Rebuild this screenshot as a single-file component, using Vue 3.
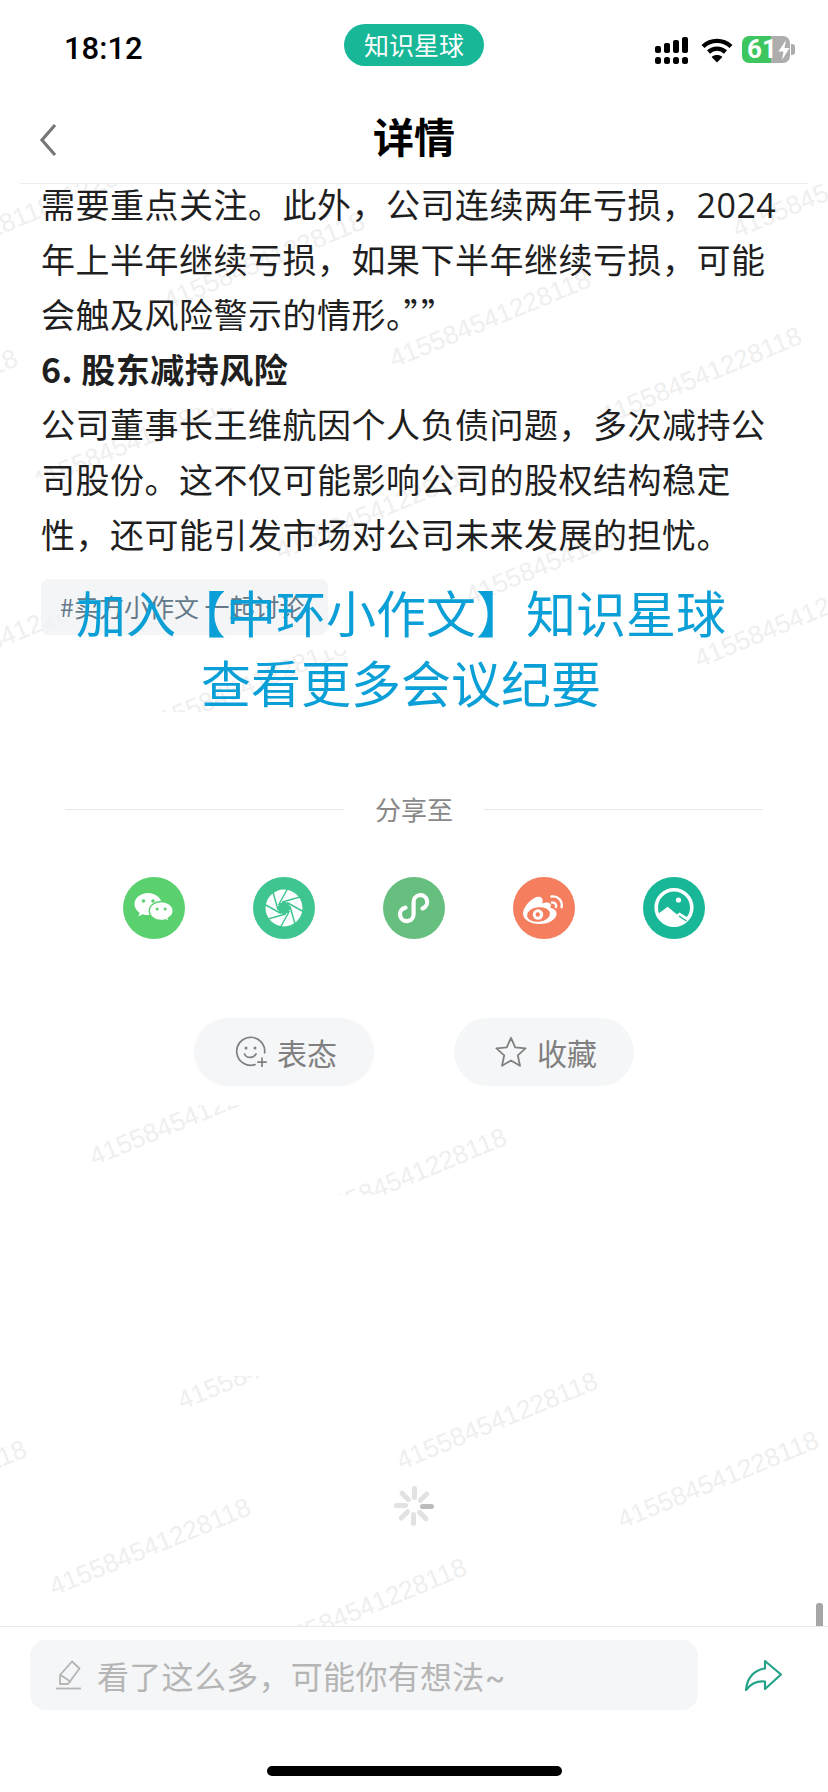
<script setup>
const marks = [
  { x: 168, y: 310 }, { x: 394, y: 368 }, { x: 605, y: 425 }, { x: -179, y: 447 },
  { x: 737, y: 238 }, { x: -143, y: 294 }, { x: -40, y: 250, top: 184, bot: 192 },
  { x: 36, y: 491, top: 408, bot: 478 }, { x: 280, y: 560, top: 470, bot: 560 },
  { x: 470, y: 605, top: 540, bot: 640 }, { x: -89, y: 685, top: 615, bot: 700 }, { x: 699, y: 668 },
  { x: 150, y: 735, top: 650, bot: 712 },
  { x: 94, y: 1166, top: 1105, bot: 1300 }, { x: 310, y: 1226, top: 1100, bot: 1195 },
  { x: 182, y: 1410, top: 1376, bot: 1500 }, { x: 401, y: 1470 }, { x: 622, y: 1529 },
  { x: -170, y: 1538 }, { x: 54, y: 1596 }, { x: 270, y: 1656, top: 1400, bot: 1626 }
].map((m, i) => ({ top: 184, bot: 1626, id: 'wm' + i, ...m }))

const ticks = [0, 45, 90, 135, 180, 225, 270, 315]
const blades = [0, 45, 90, 135, 180, 225, 270, 315]
</script>

<template>
  <div class="page">
    <svg class="marks" width="828" height="1792" viewBox="0 0 828 1792">
      <defs>
        <clipPath v-for="m in marks" :id="m.id" :key="m.id">
          <rect x="0" :y="m.top" width="828" :height="m.bot - m.top" />
        </clipPath>
      </defs>
      <g v-for="m in marks" :key="m.id" :clip-path="`url(#${m.id})`">
        <text class="mark" :transform="`translate(${m.x} ${m.y}) rotate(-22.5)`">415584541228118</text>
      </g>
    </svg>

    <header class="status">
      <div class="time">18:12</div>
      <div class="pill">知识星球</div>
      <div class="sys">
        <svg class="signal" width="33" height="27" viewBox="0 0 33 27" fill="#000">
          <rect x="0" y="9" width="6" height="7" rx="2" />
          <rect x="9" y="6" width="6" height="10" rx="2" />
          <rect x="18" y="3" width="6" height="13" rx="2" />
          <rect x="27" y="0" width="6" height="16" rx="2" />
          <rect x="0" y="20" width="6" height="7" rx="2.5" />
          <rect x="9" y="20" width="6" height="7" rx="2.5" />
          <rect x="18" y="20" width="6" height="7" rx="2.5" />
          <rect x="27" y="20" width="6" height="7" rx="2.5" />
        </svg>
        <svg class="wifi" width="32" height="26" viewBox="0 0 32 26" fill="none" stroke="#000" stroke-width="4.4">
          <path d="M2 9.5C10 2 22 2 30 9.5" />
          <path d="M7.5 15C12.5 10.5 19.5 10.5 24.5 15" />
          <path d="M16 25.5L10.6 20C13.6 17.4 18.4 17.4 21.4 20Z" fill="#000" stroke="none" />
        </svg>
        <div class="battery">
          <span class="level">61</span>
          <svg class="bolt" width="14" height="22" viewBox="0 0 14 22">
            <path d="M9 1L1.5 12.5H6.5L5 21L12.5 9H7.5Z" fill="#fff" />
          </svg>
        </div>
        <div class="nub"></div>
      </div>
    </header>

    <nav class="nav">
      <svg class="back" width="18" height="34" viewBox="0 0 18 34" fill="none" stroke="#777" stroke-width="3.2">
        <path d="M16 2L3 17L16 32" />
      </svg>
      <h1 class="title">详情</h1>
    </nav>

    <main class="scroller">
      <article class="article">
        <p>需要重点关注。此外，公司连续两年亏损，<span class="num">2024</span><br />年上半年继续亏损，如果下半年继续亏损，可能<br />会触及风险警示的情形。””</p>
        <p class="bold">6. 股东减持风险</p>
        <p>公司董事长王维航因个人负债问题，多次减持公<br />司股份。这不仅可能影响公司的股权结构稳定<br />性，还可能引发市场对公司未来发展的担忧。</p>
      </article>
      <div class="tag">#卖方小作文 一起讨论</div>

      <div class="share-title">
        <span class="rule"></span>
        <span class="share-label">分享至</span>
        <span class="rule"></span>
      </div>

      <div class="share-row">
        <svg class="share-icon" viewBox="0 0 62 62">
          <circle cx="31" cy="31" r="31" fill="#5ad16e" />
          <path d="M25 16C17.5 16 11.5 21 11.5 27.2C11.5 30.8 13.6 33.7 16.6 35.7L15.5 39.2L19.8 37.2C21.5 37.8 23.2 38.1 25 38.1C32.5 38.1 38.7 33.2 38.7 27.2C38.7 21 32.5 16 25 16Z" fill="#fff" />
          <circle cx="20.5" cy="24" r="1.8" fill="#5ad16e" />
          <circle cx="30" cy="24" r="1.8" fill="#5ad16e" />
          <path d="M38.3 24.5C31.6 24.5 26.3 28.7 26.3 34C26.3 39.3 31.6 43.4 38.3 43.4C39.7 43.4 41 43.2 42.2 42.8L46 44.6L45.1 41.3C48.1 39.6 50.2 37 50.2 34C50.2 28.7 45 24.5 38.3 24.5Z" fill="#fff" stroke="#5ad16e" stroke-width="1.4" />
          <circle cx="34.2" cy="32" r="1.5" fill="#5ad16e" />
          <circle cx="42.2" cy="32" r="1.5" fill="#5ad16e" />
        </svg>
        <svg class="share-icon" viewBox="0 0 62 62">
          <circle cx="31" cy="31" r="31" fill="#3ec590" />
          <circle cx="31" cy="31" r="18.5" fill="#fff" />
          <g v-for="b in blades" :key="b" :transform="`rotate(${b} 31 31)`">
            <path d="M25.5 28L35 11" stroke="#3ec590" stroke-width="1.5" />
          </g>
          <path d="M31 24.5L35.6 26.4L37.5 31L35.6 35.6L31 37.5L26.4 35.6L24.5 31L26.4 26.4Z" fill="#3ec590" />
        </svg>
        <svg class="share-icon" viewBox="0 0 62 62">
          <circle cx="31" cy="31" r="31" fill="#66bf7f" />
          <path d="M22.5 30.6A6.8 6.8 0 1 0 30.6 37V25.6A6.8 6.8 0 1 1 39.5 31.4" fill="none" stroke="#fff" stroke-width="4.2" stroke-linecap="round" />
        </svg>
        <svg class="share-icon" viewBox="0 0 62 62">
          <circle cx="31" cy="31" r="31" fill="#f47e5d" />
          <path d="M26.5 47C17.5 47 10 42.8 10 36.6C10 31.5 15 24.5 21 21.2C25.5 18.8 29 19.7 29.6 22.7C29.9 24.2 29.5 25.6 29.3 26.4C32.7 25 36.5 25 37.6 27.3C38.1 28.5 37.8 29.7 37.3 30.8C41.2 31.8 43.6 33.6 43.6 36.7C43.6 41.9 36.4 47 26.5 47Z" fill="#fff" />
          <ellipse cx="25.5" cy="37.5" rx="11.5" ry="7.3" fill="#f47e5d" transform="rotate(-6 25.5 37.5)" />
          <circle cx="25" cy="37.5" r="5.2" fill="#fff" />
          <circle cx="24.8" cy="37.5" r="2.2" fill="#f47e5d" />
          <path d="M39 25.5C41.8 25.2 43.6 27.2 43 30" fill="none" stroke="#fff" stroke-width="2.4" stroke-linecap="round" />
          <path d="M38.5 19.5C44.8 18.6 49.8 23.6 48.6 30.2" fill="none" stroke="#fff" stroke-width="2.4" stroke-linecap="round" />
        </svg>
        <svg class="share-icon" viewBox="0 0 62 62">
          <circle cx="31" cy="31" r="31" fill="#17b797" />
          <circle cx="31" cy="30.5" r="17.8" fill="#17b797" stroke="#fff" stroke-width="3.6" />
          <circle cx="35.5" cy="23" r="2.6" fill="#fff" />
          <path d="M15 37L24.6 29.8L34 37.6L36.4 35.6L45.6 41C42.8 45 37.4 47 31 47C24 47 18 43.5 15 37Z" fill="#fff" />
          <path d="M36 39L43.5 44" stroke="#17b797" stroke-width="1.4" />
        </svg>
      </div>

      <div class="actions">
        <button class="act">
          <svg width="32" height="32" viewBox="0 0 32 32" fill="none" stroke="#808080" stroke-width="1.7">
            <path d="M20 28.6A14 14 0 1 1 29.6 17" stroke-linecap="round" />
            <circle cx="11" cy="12" r="1.5" fill="#808080" stroke="none" />
            <circle cx="20" cy="12" r="1.5" fill="#808080" stroke="none" />
            <path d="M9.5 18C11.5 22.5 18.5 22.5 21 18" stroke-linecap="round" />
            <path d="M27 21.5V31M22.2 26.2H31.8" />
          </svg>
          <span>表态</span>
        </button>
        <button class="act">
          <svg width="32" height="32" viewBox="0 0 32 32" fill="none" stroke="#808080" stroke-width="1.8" stroke-linejoin="round">
            <path d="M16 1.8L20.2 11.3L30.6 12.4L22.8 19.3L25 29.8L16 24.4L7 29.8L9.2 19.3L1.4 12.4L11.8 11.3Z" />
          </svg>
          <span>收藏</span>
        </button>
      </div>

      <div class="spinner">
        <span v-for="(t, i) in ticks" :key="t" class="tick" :class="{ dark: i === 2 }" :style="{ transform: `rotate(${t}deg)` }"></span>
      </div>
    </main>

    <div class="join">加入【中环小作文】知识星球<br />查看更多会议纪要</div>
    <div class="thumb"></div>

    <footer class="foot">
      <div class="bar">
        <div class="input">
          <svg width="27" height="30" viewBox="0 0 27 30" fill="none" stroke="#b5b5b5" stroke-width="1.8" stroke-linejoin="round">
            <path d="M17 1.5L24.5 8.5L13 24H5V15Z" />
            <path d="M5.5 15L16 22" />
            <path d="M1 28.5H26" />
          </svg>
          <span>看了这么多，可能你有想法~</span>
        </div>
        <svg class="send" width="40" height="32" viewBox="0 0 40 32" fill="none" stroke="#24a388" stroke-width="2.2" stroke-linejoin="round">
          <path d="M21 2L37 15.5L21 30V22.5C12 21.5 6.5 25 2 31C3 19 10 11 21 9.5Z" />
        </svg>
      </div>
      <div class="home"></div>
    </footer>
  </div>
</template>

<style scoped>
.page {
  position: relative;
  width: 828px;
  height: 1792px;
  overflow: hidden;
  background: #fff;
  display: flex;
  flex-direction: column;
  font-family: "Noto Sans CJK SC", "Liberation Sans", sans-serif;
}
.marks { position: absolute; inset: 0; pointer-events: none; }
.mark { font-family: "Liberation Sans", sans-serif; font-size: 26px; fill: #efefef; }

.status {
  position: relative;
  height: 90px;
  display: grid;
  grid-template-columns: 1fr 140px 1fr;
  align-items: start;
}
.time {
  margin: 29px 0 0 64px;
  font-family: "Roboto", sans-serif;
  font-weight: 500;
  font-size: 31px;
  line-height: 40px;
  color: #000;
}
.pill {
  margin-top: 24px;
  height: 42px;
  border-radius: 21px;
  background: #17b797;
  color: #fff;
  font-size: 25px;
  font-weight: 400;
  line-height: 40px;
  text-align: center;
}
.sys {
  margin: 36px 0 0 171px;
  display: flex;
  align-items: flex-start;
}
.signal { margin-top: 1px; flex: none; }
.wifi { margin: 1px 0 0 13px; flex: none; }
.battery {
  position: relative;
  flex: none;
  margin-left: 9px;
  width: 48px;
  height: 27px;
  border-radius: 7px;
  background: linear-gradient(90deg, #3dc65f 0 60%, #adadad 60% 100%);
  display: flex;
  align-items: center;
  overflow: hidden;
}
.level {
  margin-left: 5px;
  font-family: "Roboto", sans-serif;
  font-weight: 700;
  font-size: 26px;
  line-height: 27px;
  color: #fff;
}
.bolt { margin-left: 0; flex: none; }
.nub {
  flex: none;
  margin: 8px 0 0 1px;
  width: 4px;
  height: 11px;
  border-radius: 0 3px 3px 0;
  background: #adadad;
}

.nav {
  position: relative;
  height: 94px;
  margin: 0 20px;
  box-sizing: border-box;
  border-bottom: 1px solid #ececec;
  display: flex;
  justify-content: center;
}
.back { position: absolute; left: 19px; top: 33px; }
.title {
  margin: 16px 0 0;
  font-size: 41px;
  line-height: 58px;
  font-weight: 700;
  color: #000;
}

.scroller {
  position: relative;
  flex: 1;
  min-height: 0;
  overflow: hidden;
  padding: 0 41px;
}
.article {
  margin-top: -8px;
  font-size: 34px;
  letter-spacing: 0.5px;
  line-height: 55px;
  color: #1f1f1f;
  white-space: nowrap;
}
.article p { margin: 0; }
.article .bold { font-weight: 700; }
.article .num { font-family: "Open Sans", sans-serif; line-height: 1; }
.tag {
  margin-top: 18px;
  width: 287px;
  height: 56px;
  box-sizing: border-box;
  padding-left: 19px;
  border-radius: 8px;
  background: rgba(240, 242, 244, 0.8);
  color: #64798a;
  font-size: 25px;
  line-height: 54px;
  white-space: nowrap;
}
.share-title {
  margin: 156px 0 0 24px;
  width: 698px;
  height: 36px;
  display: flex;
  align-items: center;
}
.rule { flex: 1; height: 1px; background: #e8e8e8; }
.share-label {
  width: 140px;
  text-align: center;
  font-size: 26px;
  line-height: 36px;
  color: #888;
}
.share-row {
  margin: 50px 0 0 82px;
  display: flex;
  gap: 68px;
}
.share-icon { width: 62px; height: 62px; display: block; }
.actions {
  margin: 79px 0 0 153px;
  display: flex;
  gap: 80px;
}
.act {
  width: 180px;
  height: 68px;
  border: 0;
  padding: 0 0 0 4px;
  border-radius: 34px;
  background: #f5f6f7;
  color: #808080;
  font-family: inherit;
  font-size: 30px;
  display: flex;
  align-items: center;
  justify-content: center;
  gap: 10px;
}
.spinner {
  position: relative;
  margin: 400px 0 0 353px;
  width: 40px;
  height: 40px;
}
.tick {
  position: absolute;
  left: 0;
  top: 0;
  width: 40px;
  height: 40px;
}
.tick::after {
  content: "";
  position: absolute;
  left: 17.5px;
  top: 0;
  width: 5px;
  height: 14px;
  border-radius: 3px;
  background: #e2e2e2;
}
.tick.dark::after { background: #bdbdbd; }

.join {
  position: absolute;
  left: 0;
  right: 0;
  top: 576px;
  text-align: center;
  font-size: 50px;
  line-height: 70px;
  color: #0a9fd6;
  transform: translateX(-13px);
}
.thumb {
  position: absolute;
  left: 816px;
  top: 1603px;
  width: 7px;
  height: 24px;
  border-radius: 3px 3px 0 0;
  background: #a6a6a6;
}

.foot {
  position: relative;
  height: 166px;
  box-sizing: border-box;
  border-top: 1px solid #e9e9e9;
  padding-top: 13px;
  background: #fff;
}
.bar {
  display: flex;
  align-items: center;
  padding-left: 30px;
}
.input {
  width: 668px;
  height: 70px;
  box-sizing: border-box;
  padding-left: 25px;
  border-radius: 16px;
  background: #f5f6f7;
  display: flex;
  align-items: center;
  gap: 15px;
  color: #b5b5b5;
  font-family: "Inter", "Noto Sans CJK SC", sans-serif;
  font-size: 32px;
  letter-spacing: 0.3px;
}
.send { margin-left: 46px; }
.home {
  margin: 56px 0 0 267px;
  width: 295px;
  height: 10px;
  border-radius: 5px;
  background: #000;
}
</style>

<style>
html, body { margin: 0; background: #fff; }
</style>
